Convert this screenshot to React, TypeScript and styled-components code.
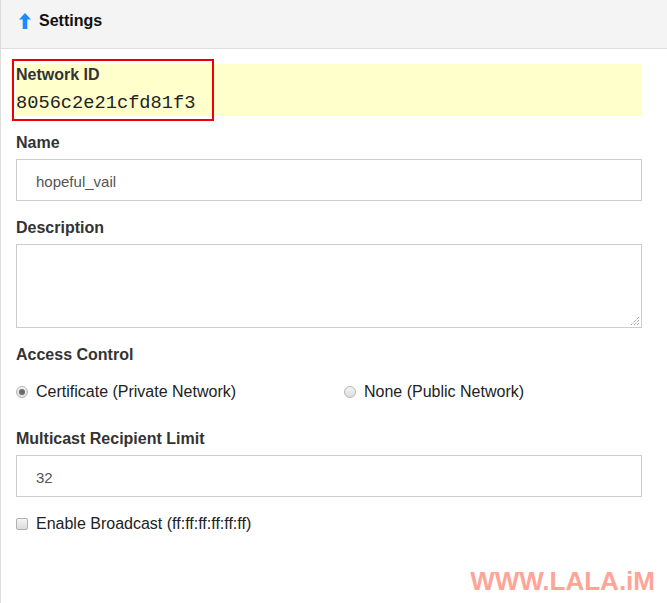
import React from "react";
import styled, { createGlobalStyle } from "styled-components";

const Global = createGlobalStyle`
  html, body { margin: 0; padding: 0; background: #fff; }
  body { font-family: "Liberation Sans", Arial, sans-serif; color: #333; }
  * { box-sizing: border-box; }
`;

const Page = styled.div`
  position: relative;
  width: 667px;
  height: 603px;
  border-left: 1px solid #dcdcdc;
  overflow: hidden;
`;

const Header = styled.div`
  height: 49px;
  background: #f4f4f4;
  border-bottom: 1px solid #dddddd;
  display: flex;
  align-items: center;
  gap: 8px;
  padding: 0 0 6px 18px;
  font-size: 16px;
  font-weight: bold;
  color: #111;
`;

const Content = styled.div`
  padding: 15px 25px 0 15px;
  display: flex;
  flex-direction: column;
`;

const IdBox = styled.div`
  position: relative;
  background: #ffffcc;
  height: 52px;
  margin-bottom: 16px;
`;

const Highlight = styled.div`
  position: absolute;
  left: -4px;
  top: -5px;
  width: 202px;
  height: 62px;
  border: 2px solid #ee0000;
  pointer-events: none;
`;

const Label = styled.div<{ $gap?: number }>`
  font-size: 16px;
  font-weight: bold;
  line-height: 18px;
  padding-top: 2px;
  color: #333;
  margin-bottom: ${(p) => p.$gap ?? 7}px;
`;

const IdValue = styled.div`
  font-family: "Liberation Mono", "DejaVu Sans Mono", monospace;
  font-size: 18.7px;
  line-height: 24px;
  color: #222;
  margin-top: 7px;
`;

const Field = styled.div<{ $mb?: number }>`
  display: flex;
  flex-direction: column;
  margin-bottom: ${(p) => p.$mb ?? 16}px;
`;

const Input = styled.div`
  height: 42px;
  border: 1px solid #cccccc;
  display: flex;
  align-items: center;
  padding: 3px 0 0 19px;
  font-size: 15px;
  color: #555;
`;

const TextArea = styled.div`
  position: relative;
  height: 84px;
  border: 1px solid #cccccc;
`;

const Grip = styled.svg`
  position: absolute;
  right: 1px;
  bottom: 1px;
`;

const RadioRow = styled.div`
  display: grid;
  grid-template-columns: 328px 1fr;
  height: 20px;
  margin-bottom: 27px;
`;

const Option = styled.div`
  display: flex;
  align-items: center;
  gap: 8px;
  height: 20px;
  padding-top: 2px;
  font-size: 16px;
  color: #222;
`;

const Radio = styled.span<{ $on?: boolean }>`
  width: 12px;
  height: 12px;
  border-radius: 50%;
  border: 1px solid #b4b4b4;
  background: linear-gradient(#f4f4f4, #dedede);
  display: flex;
  align-items: center;
  justify-content: center;
  &::after {
    content: "";
    width: 6px;
    height: 6px;
    border-radius: 50%;
    background: ${(p) => (p.$on ? "#6a6a6a" : "transparent")};
  }
`;

const Check = styled.span`
  width: 12px;
  height: 12px;
  border-radius: 2px;
  border: 1px solid #b0b0b0;
  background: linear-gradient(#f4f4f4, #dcdcdc);
`;

const Watermark = styled.div`
  position: absolute;
  right: 12px;
  bottom: 6px;
  font-family: "Liberation Sans", Arial, sans-serif;
  font-weight: bold;
  font-size: 26px;
  color: #ffa497;
`;

export default function App() {
  return (
    <>
      <Global />
      <Page>
        <Header>
          <svg width="12" height="16" viewBox="0 0 12 16">
            <path d="M6 0 L12 6.5 H8.3 V16 H3.7 V6.5 H0 Z" fill="#1a8cff" />
          </svg>
          Settings
        </Header>
        <Content>
          <IdBox>
            <Label $gap={0}>Network ID</Label>
            <IdValue>8056c2e21cfd81f3</IdValue>
            <Highlight />
          </IdBox>
          <Field>
            <Label>Name</Label>
            <Input>hopeful_vail</Input>
          </Field>
          <Field>
            <Label>Description</Label>
            <TextArea>
              <Grip width="12" height="12" viewBox="0 0 12 12">
                <path d="M11 3 L3 11 M11 6 L6 11 M11 9 L9 11" stroke="#777" strokeWidth="1" strokeDasharray="1 1" />
              </Grip>
            </TextArea>
          </Field>
          <Field $mb={0}>
            <Label $gap={17}>Access Control</Label>
            <RadioRow>
              <Option>
                <Radio $on />
                Certificate (Private Network)
              </Option>
              <Option>
                <Radio />
                None (Public Network)
              </Option>
            </RadioRow>
          </Field>
          <Field>
            <Label>Multicast Recipient Limit</Label>
            <Input>32</Input>
          </Field>
          <Option>
            <Check />
            Enable Broadcast (ff:ff:ff:ff:ff:ff)
          </Option>
        </Content>
        <Watermark>WWW.LALA.iM</Watermark>
      </Page>
    </>
  );
}
